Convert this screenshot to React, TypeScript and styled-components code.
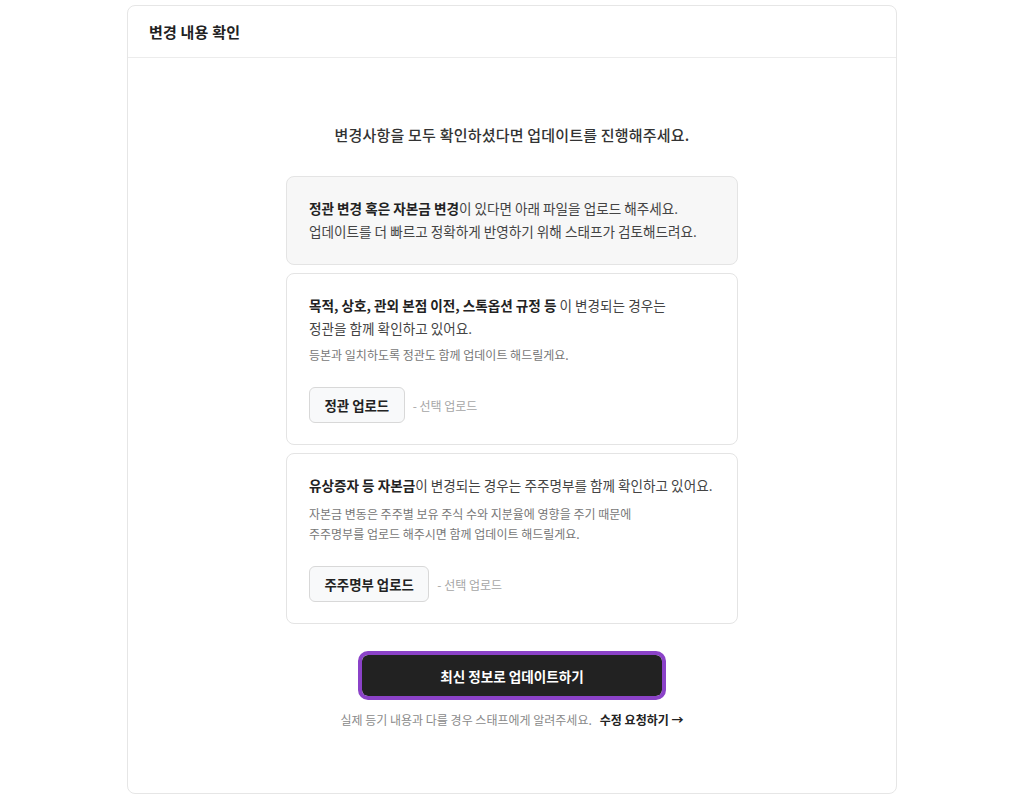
import React from "react";
import styled, { createGlobalStyle } from "styled-components";

const Global = createGlobalStyle`
  html, body { margin: 0; padding: 0; background: #ffffff; }
  body {
    font-family: "Noto Sans CJK KR", "Noto Sans", sans-serif;
    color: #333;
    -webkit-font-smoothing: antialiased;
  }
  * { box-sizing: border-box; }
`;

const Page = styled.div`
  display: flex;
  justify-content: center;
  padding-top: 5px;
`;

const Card = styled.section`
  width: 770px;
  height: 789px;
  border: 1px solid #e6e6e6;
  border-radius: 8px;
  background: #fff;
  display: flex;
  flex-direction: column;
`;

const Header = styled.header`
  height: 52px;
  flex: none;
  display: flex;
  align-items: center;
  padding: 0 21px;
  border-bottom: 1px solid #ececec;
  font-size: 15px;
  font-weight: 600;
  letter-spacing: 0.2px;
  color: #222;
`;

const Body = styled.div`
  display: flex;
  flex-direction: column;
  align-items: center;
  padding-top: 66px;
`;

const Title = styled.h2`
  margin: 0 0 30px;
  font-size: 15px;
  line-height: 22px;
  font-weight: 500;
  letter-spacing: 0.2px;
  color: #333;
`;

const Stack = styled.div`
  width: 452px;
  display: flex;
  flex-direction: column;
  gap: 8px;
`;

const Box = styled.div<{ $muted?: boolean }>`
  border: 1px solid #e4e4e4;
  border-radius: 8px;
  background: ${(p) => (p.$muted ? "#f7f7f7" : "#ffffff")};
  padding: 20px 22px 21px;
`;

const Lead = styled.p`
  margin: 0;
  font-size: 13.6px;
  line-height: 23px;
  color: #444;
  strong {
    font-weight: 700;
    color: #222;
  }
`;

const Note = styled.p<{ $gap?: number }>`
  margin: ${(p) => p.$gap ?? 5}px 0 0;
  font-size: 12px;
  line-height: 20px;
  color: #777;
`;

const UploadRow = styled.div`
  margin-top: 22px;
  display: flex;
  align-items: center;
  gap: 8px;
`;

const UploadButton = styled.button`
  height: 36px;
  padding: 0 14.5px;
  border: 1px solid #d8d8d8;
  border-radius: 6px;
  background: #f8f9fa;
  font-family: inherit;
  font-size: 13.4px;
  font-weight: 600;
  color: #222;
  cursor: pointer;
`;

const Optional = styled.span`
  font-size: 12px;
  color: #a6a6a6;
`;

const Primary = styled.button`
  margin-top: 31px;
  width: 300px;
  height: 41px;
  border: none;
  border-radius: 6px;
  background: #222222;
  outline: 4px solid #8b42c8;
  outline-offset: 0;
  font-family: inherit;
  font-size: 13.6px;
  font-weight: 700;
  color: #fff;
  cursor: pointer;
`;

const Footer = styled.p`
  margin: 15px 0 0;
  font-size: 12px;
  line-height: 18px;
  color: #8a8a8a;
  display: flex;
  align-items: center;
  gap: 8px;
`;

const FixLink = styled.a`
  color: #222;
  font-weight: 700;
  text-decoration: none;
  cursor: pointer;
`;

export default function App() {
  return (
    <>
      <Global />
      <Page>
        <Card>
          <Header>변경 내용 확인</Header>
          <Body>
            <Title>변경사항을 모두 확인하셨다면 업데이트를 진행해주세요.</Title>
            <Stack>
              <Box $muted>
                <Lead>
                  <strong>정관 변경 혹은 자본금 변경</strong>이 있다면 아래 파일을 업로드 해주세요.
                  <br />
                  업데이트를 더 빠르고 정확하게 반영하기 위해 스태프가 검토해드려요.
                </Lead>
              </Box>
              <Box>
                <Lead>
                  <strong>목적, 상호, 관외 본점 이전, 스톡옵션 규정 등</strong> 이 변경되는 경우는
                  <br />
                  정관을 함께 확인하고 있어요.
                </Lead>
                <Note>등본과 일치하도록 정관도 함께 업데이트 해드릴게요.</Note>
                <UploadRow>
                  <UploadButton>정관 업로드</UploadButton>
                  <Optional>- 선택 업로드</Optional>
                </UploadRow>
              </Box>
              <Box>
                <Lead>
                  <strong>유상증자 등 자본금</strong>이 변경되는 경우는 주주명부를 함께 확인하고 있어요.
                </Lead>
                <Note $gap={7}>
                  자본금 변동은 주주별 보유 주식 수와 지분율에 영향을 주기 때문에
                  <br />
                  주주명부를 업로드 해주시면 함께 업데이트 해드릴게요.
                </Note>
                <UploadRow>
                  <UploadButton>주주명부 업로드</UploadButton>
                  <Optional>- 선택 업로드</Optional>
                </UploadRow>
              </Box>
            </Stack>
            <Primary>최신 정보로 업데이트하기</Primary>
            <Footer>
              실제 등기 내용과 다를 경우 스태프에게 알려주세요.
              <FixLink>수정 요청하기 →</FixLink>
            </Footer>
          </Body>
        </Card>
      </Page>
    </>
  );
}
